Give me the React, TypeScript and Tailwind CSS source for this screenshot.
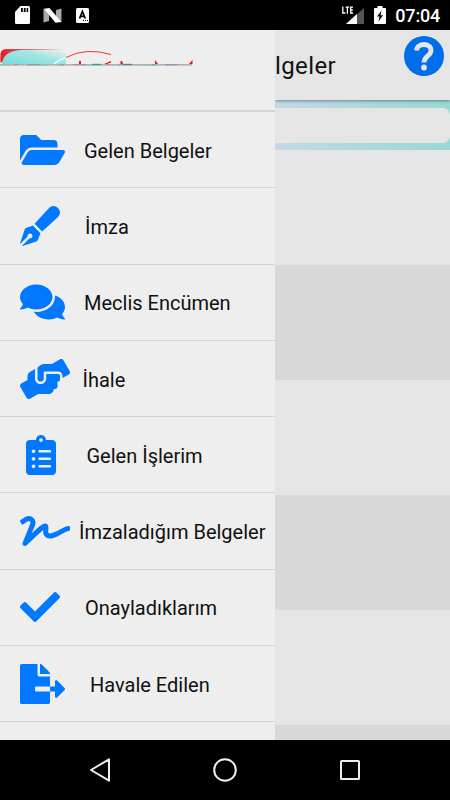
import {
  FaCheck,
  FaClipboardList,
  FaComments,
  FaFileExport,
  FaFolderOpen,
  FaHandsHelping,
  FaPenFancy,
  FaSignature,
} from "react-icons/fa";

const menuItems = [
  { label: "Gelen Belgeler", Icon: FaFolderOpen, width: "w-[45px]", gap: "ml-[19px]" },
  { label: "İmza", Icon: FaPenFancy, width: "w-[40px]", gap: "ml-[25px]" },
  { label: "Meclis Encümen", Icon: FaComments, width: "w-[45px]", gap: "ml-[19px]" },
  { label: "İhale", Icon: FaHandsHelping, width: "w-[50px]", gap: "ml-[12.500px]" },
  { label: "Gelen İşlerim", Icon: FaClipboardList, width: "w-[42px]", gap: "ml-[24.500px]" },
  { label: "İmzaladığım Belgeler", Icon: FaSignature, width: "w-[50px]", gap: "ml-[9px]" },
  { label: "Onayladıklarım", Icon: FaCheck, width: "w-[40px]", gap: "ml-[25px]" },
  { label: "Havale Edilen", Icon: FaFileExport, width: "w-[45px]", gap: "ml-[25px]" },
];

const StatusBar = () => {
  return (
    <header className="flex h-[30px] shrink-0 items-center justify-between bg-black pl-[15px] pr-[10px] text-white">
      <div className="flex items-center">
        <svg className="h-[18px] w-[15px]" viewBox="0 0 15 18">
          <path d="M5.5 0H13.5Q15 0 15 1.5V16.5Q15 18 13.5 18H1.5Q0 18 0 16.5V6Z" fill="#fff" />
          <path d="M6 2h1.8v4H6zM8.8 2h1.8v4H8.8zM11.6 2h1.6v4h-1.6z" fill="#000" />
        </svg>
        <svg className="ml-[13px] h-[15px] w-[19px]" viewBox="0 0 19 15">
          <path d="M0.5 0.5L6 4V13L0.5 14.5ZM18.5 0.5V14.5L13 11V2Z" fill="#aaa" />
          <path d="M1 0.8L6.5 0L18.3 14L12.5 14.8Z" fill="#fff" />
        </svg>
        <svg className="ml-[14px] h-[15px] w-[13px]" viewBox="0 0 13 15">
          <rect width="13" height="15" rx="1.5" fill="#fff" />
          <path d="M3.5 10.5L6.4 3.5L9.3 10.5M4.4 8.3H8.4" fill="none" stroke="#000" strokeWidth="1.7" />
          <path d="M7 12h1v1H7zM9 12h1v1H9zM11 12h1v1h-1z" fill="#000" />
        </svg>
      </div>
      <div className="flex items-center">
        <svg className="h-[18px] w-[22px]" viewBox="0 0 22 18">
          <path d="M22 2V18H4Z" fill="#555" />
          <path d="M15 8V18H4Z" fill="#fff" />
          <path
            d="M0.8 0.5V7H3.4M3.6 1.2H7.2M5.4 1V7.7M11 1.2H8.7V7H11M8.7 4H10.8"
            fill="none"
            stroke="#fff"
            strokeWidth="1.3"
          />
        </svg>
        <svg className="ml-[10px] h-[18px] w-[12px]" viewBox="0 0 12 18">
          <path d="M3.5 0H8.5V2H11Q12 2 12 3V17Q12 18 11 18H1Q0 18 0 17V3Q0 2 1 2H3.5Z" fill="#fff" />
          <path d="M7.5 4.5L3 10.5H5.5L4.5 15.5L9 9.3H6.5Z" fill="#000" />
        </svg>
        <span className="ml-[9px] mt-px text-[18px] font-medium leading-[28px] tracking-[-0.200px]">07:04</span>
      </div>
    </header>
  );
};

const Logo = () => {
  return (
    <svg className="h-[20px] w-[195px]" viewBox="0 0 195 20">
      <defs>
        <linearGradient id="logo-fill" x1="0" y1="1" x2="1" y2="0">
          <stop offset="0" stopColor="#72dddb" />
          <stop offset="0.6" stopColor="#a5e5e2" />
          <stop offset="1" stopColor="#f2f2f2" />
        </linearGradient>
        <linearGradient id="logo-edge" x1="0" y1="0" x2="1" y2="0">
          <stop offset="0" stopColor="#f01820" />
          <stop offset="0.5" stopColor="#d87878" />
          <stop offset="1" stopColor="#eee" />
        </linearGradient>
      </defs>
      <path d="M0.500 15V6Q1 1 7 1H60Q65 1 65.500 4L20 3Z" fill="url(#logo-edge)" />
      <path d="M2 16Q3 3 21 2H62Q66 2 66 5V16Z" fill="url(#logo-fill)" />
      <path d="M54 16Q59 12 67 9" fill="none" stroke="#fff" strokeWidth="1.2" />
      <path d="M66 9.500Q86 -1 111 6.500" fill="none" stroke="#ee2222" strokeWidth="0.9" />
      <path d="M79 13h2v3h-2zM104 16L111 13V14.500L107 16ZM120.500 13h1.500l1 3h-2.500zM155 12l3 4h-3zM189 16l3.500-4v4z" fill="#e11" />
      <path d="M0 16.900H192" stroke="#a99" strokeWidth="1.3" />
      <path d="M1 17.200H192" stroke="#6ccfca" strokeWidth="0.8" strokeDasharray="9 17 21 8" />
      <path d="M14 16.700H192" stroke="#b66faa" strokeWidth="0.7" strokeDasharray="4 9 13 20" />
      <path d="M92 16.300H150" stroke="#257a7a" strokeWidth="0.8" strokeDasharray="9 22" />
    </svg>
  );
};

const Drawer = () => {
  return (
    <aside className="w-[275px] shrink-0 overflow-hidden bg-[#eeeeee]">
      <div className="h-[82px] border-b-2 border-[#d2d6da] pt-[18px]">
        <Logo />
      </div>
      <nav className="pt-[0.200px]">
        {menuItems.map(({ label, Icon, width, gap }) => (
          <a key={label} className="flex h-[76.250px] items-center border-b border-[#d2d4d8] pl-5">
            <Icon className={`h-10 shrink-0 text-[#0078ff] ${width}`} />
            <span className={`whitespace-nowrap pt-[2px] text-[20px] ${gap}`}>{label}</span>
          </a>
        ))}
      </nav>
    </aside>
  );
};

const Page = () => {
  return (
    <main className="flex flex-1 flex-col overflow-hidden bg-[#e5e5e5]">
      <div className="z-10 flex h-[70px] shrink-0 justify-between pr-[6px] shadow-[0_1px_3px_rgba(0,0,0,0.4)]">
        <h1 className="pt-px text-[24px] leading-[70px] tracking-[0.4px]">lgeler</h1>
        <svg className="mt-[6px] h-10 w-10" viewBox="0 0 40 40">
          <circle cx="20" cy="20" r="20" fill="#006eea" />
          <path
            d="M12.500 14.500C13 6.500 27 6.500 27 14.500C27 20 20 20 20 26.500"
            fill="none"
            stroke="#e5e5e5"
            strokeWidth="4.800"
          />
          <circle cx="20" cy="31.500" r="2.900" fill="#e5e5e5" />
        </svg>
      </div>
      <div className="h-[50px] shrink-0 bg-linear-to-r from-[#c3d9e7] to-[#98d8d4] pt-[7.500px]">
        <div className="h-[35px] rounded-r-[7px] bg-[#e5e5e5]" />
      </div>
      <div className="h-[115px] shrink-0" />
      <div className="h-[115px] shrink-0 bg-[#d8d8d8]" />
      <div className="h-[115px] shrink-0" />
      <div className="h-[115px] shrink-0 bg-[#d8d8d8]" />
      <div className="h-[115px] shrink-0" />
      <div className="h-[15px] shrink-0 bg-[#d8d8d8]" />
    </main>
  );
};

const NavigationBar = () => {
  return (
    <footer className="h-[60px] shrink-0 bg-black">
      <svg className="h-[60px] w-[450px]" viewBox="0 0 450 60" fill="none" stroke="#eee" strokeWidth="2">
        <path d="M109 19.300V40.700L91 30Z" strokeLinejoin="round" />
        <circle cx="225" cy="30" r="10.800" />
        <rect x="341" y="21" width="18" height="18" rx="0.500" />
      </svg>
    </footer>
  );
};

const App = () => {
  return (
    <div className="flex h-[800px] w-[450px] flex-col overflow-hidden font-['Roboto',sans-serif] text-[#111]">
      <StatusBar />
      <div className="flex h-[710px] shrink-0">
        <Drawer />
        <Page />
      </div>
      <NavigationBar />
    </div>
  );
};

export default App;
